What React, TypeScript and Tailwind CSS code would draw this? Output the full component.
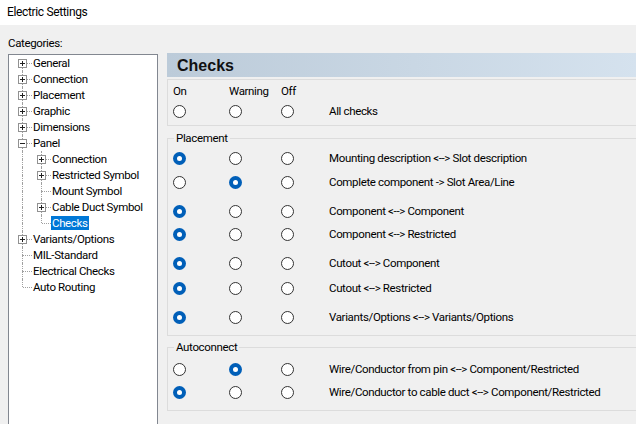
import React from "react";

type Node = { label: string; children?: Node[]; expandable?: boolean; expanded?: boolean; selected?: boolean };

const tree: Node[] = [
  { label: "General", expandable: true },
  { label: "Connection", expandable: true },
  { label: "Placement", expandable: true },
  { label: "Graphic", expandable: true },
  { label: "Dimensions", expandable: true },
  {
    label: "Panel",
    expandable: true,
    expanded: true,
    children: [
      { label: "Connection", expandable: true },
      { label: "Restricted Symbol", expandable: true },
      { label: "Mount Symbol" },
      { label: "Cable Duct Symbol", expandable: true },
      { label: "Checks", selected: true },
    ],
  },
  { label: "Variants/Options", expandable: true },
  { label: "MIL-Standard" },
  { label: "Electrical Checks" },
  { label: "Auto Routing" },
];

function Expander({ expanded }: { expanded?: boolean }) {
  return (
    <div className="absolute left-[5px] top-[4px] w-[9px] h-[9px] border border-[#919191] bg-white">
      <svg width="7" height="7" viewBox="0 0 7 7" className="block">
        <rect x="1" y="3" width="5" height="1" fill="#222" />
        {!expanded && <rect x="3" y="1" width="1" height="5" fill="#222" />}
      </svg>
    </div>
  );
}

function Cell({ top, bottom, own, expandable, expanded }: { top: boolean; bottom: boolean; own: boolean; expandable?: boolean; expanded?: boolean }) {
  return (
    <div className="relative w-[19px] h-[16px] shrink-0">
      {top && <div className="absolute left-[9px] top-0 h-[8px] border-l border-dotted border-[#a0a0a0]" />}
      {bottom && <div className="absolute left-[9px] top-[8px] h-[8px] border-l border-dotted border-[#a0a0a0]" />}
      {own && <div className="absolute left-[10px] top-[8px] w-[9px] border-t border-dotted border-[#a0a0a0]" />}
      {expandable && <Expander expanded={expanded} />}
    </div>
  );
}

function TreeRows() {
  const rows: React.ReactNode[] = [];
  tree.forEach((n, i) => {
    const last = i === tree.length - 1;
    rows.push(
      <div key={`r${i}`} className="flex items-center h-[16px]">
        <Cell top={i !== 0} bottom={!last} own expandable={n.expandable} expanded={n.expanded} />
        <span className="px-[1px] leading-[14px] whitespace-nowrap">{n.label}</span>
      </div>
    );
    if (n.children) {
      n.children.forEach((c, j) => {
        const clast = j === n.children!.length - 1;
        rows.push(
          <div key={`r${i}-${j}`} className="flex items-center h-[16px]">
            <Cell top bottom={!last} own={false} />
            <Cell top bottom={!clast} own expandable={c.expandable} />
            <span
              className={
                "px-[1px] leading-[14px] whitespace-nowrap " + (c.selected ? "bg-[#0078d7] text-white" : "")
              }
            >
              {c.label}
            </span>
          </div>
        );
      });
    }
  });
  return <>{rows}</>;
}

function Radio({ checked }: { checked?: boolean }) {
  if (checked)
    return (
      <div className="w-[13px] h-[13px] rounded-full bg-[#005fb8] flex items-center justify-center">
        <div className="w-[5px] h-[5px] rounded-full bg-white" />
      </div>
    );
  return <div className="w-[13px] h-[13px] rounded-full border border-[#333] bg-white" />;
}

function Row({ sel, label, mt }: { sel: number; label: string; mt: string }) {
  return (
    <div className={"flex items-center h-[22px] pl-[5px] " + mt}>
      <div className="w-[56px]"><Radio checked={sel === 0} /></div>
      <div className="w-[52px]"><Radio checked={sel === 1} /></div>
      <div className="w-[48px]"><Radio checked={sel === 2} /></div>
      <span className="whitespace-nowrap">{label}</span>
    </div>
  );
}

export default function App() {
  return (
    <div
      className="w-[636px] h-[424px] overflow-hidden bg-[#f0f0f0] text-[11.5px] leading-[15px] text-black tracking-[-0.35px]"
      style={{ fontFamily: 'Roboto, "Liberation Sans", Arial, sans-serif' }}
    >
      <div className="h-[25px] bg-white pl-[7px] flex items-center text-[12px]">Electric Settings</div>
      <div className="flex">
        <div className="pl-[8px] shrink-0">
          <div className="mt-[11px] h-[15px]">Categories:</div>
          <div className="mt-[3px] w-[150px] h-[400px] border border-[#828790] bg-white pl-[4px]">
            <TreeRows />
          </div>
        </div>
        <div className="ml-[9px] w-[490px] shrink-0 pt-[28px]">
          <div className="h-[24px] bg-gradient-to-r from-[#bccbd9] to-[#d6e3ef] flex items-center pl-[10px]">
            <span className="text-[16px] font-bold text-[#111] tracking-normal" style={{ fontFamily: '"Liberation Sans", Arial, sans-serif' }}>Checks</span>
          </div>
          <div className="mt-[2px] border border-[#dcdcdc] pl-[5px] pt-[4px] pb-[6px]">
            <div className="flex h-[15px]">
              <span className="w-[56px]">On</span>
              <span className="w-[52px]">Warning</span>
              <span className="w-[48px]">Off</span>
            </div>
            <div className="flex items-center mt-[5px]">
              <div className="w-[56px]"><Radio /></div>
              <div className="w-[52px]"><Radio /></div>
              <div className="w-[48px]"><Radio /></div>
              <span>All checks</span>
            </div>
          </div>
          <fieldset className="mt-[5px] border border-[#dcdcdc] pb-[7px]">
            <legend className="ml-[6px] px-[2px] leading-[15px]">Placement</legend>
            <Row sel={0} label="Mounting description <--> Slot description" mt="mt-[1px]" />
            <Row sel={1} label="Complete component -> Slot Area/Line" mt="mt-[2px]" />
            <Row sel={0} label="Component <--> Component" mt="mt-[7px]" />
            <Row sel={0} label="Component <--> Restricted" mt="mt-[1px]" />
            <Row sel={0} label="Cutout <--> Component" mt="mt-[7px]" />
            <Row sel={0} label="Cutout <--> Restricted" mt="mt-[3px]" />
            <Row sel={0} label="Variants/Options <--> Variants/Options" mt="mt-[7px]" />
          </fieldset>
          <fieldset className="mt-[4px] border border-[#dcdcdc] pb-[7px]">
            <legend className="ml-[6px] px-[2px] leading-[15px]">Autoconnect</legend>
            <Row sel={1} label="Wire/Conductor from pin <--> Component/Restricted" mt="mt-[3px]" />
            <Row sel={0} label="Wire/Conductor to cable duct <--> Component/Restricted" mt="mt-[1px]" />
          </fieldset>
        </div>
      </div>
    </div>
  );
}
